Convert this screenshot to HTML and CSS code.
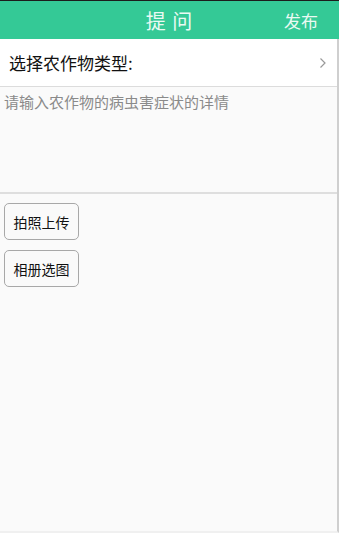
FILE: index.html
```html
<!DOCTYPE html>
<html lang="zh">
<head>
<meta charset="utf-8">
<link rel="stylesheet" href="styles.css">
</head>
<body>
<div class="app">
  <header class="topbar">
    <div class="title">提 问</div>
    <div class="publish">发布</div>
  </header>
  <main class="content">
    <div class="select-row">
      <span class="select-label">选择农作物类型:</span>
      <svg class="chevron" width="8" height="12" viewBox="0 0 8 12"><path d="M1.5 1.5 L6 6 L1.5 10.5" fill="none" stroke="#999" stroke-width="1.2"/></svg>
    </div>
    <div class="detail">
      <div class="placeholder">请输入农作物的病虫害症状的详情</div>
    </div>
    <div class="actions">
      <button class="btn">拍照上传</button>
      <button class="btn">相册选图</button>
    </div>
  </main>
</div>
</body>
</html>
```

FILE: styles.css
```css
html, body {
  margin: 0;
  padding: 0;
  height: 100%;
}
body {
  background: #fafafa;
  font-family: "Noto Sans CJK SC", "Noto Sans", sans-serif;
  color: #111;
}
.app {
  display: flex;
  flex-direction: column;
  height: 533px;
  box-sizing: border-box;
  border-top: 1px solid #1c1c1c;
}
.topbar {
  height: 38px;
  flex: none;
  background: #34c996;
  display: flex;
  align-items: center;
  justify-content: center;
  position: relative;
}
.title {
  color: #eafaf3;
  font-size: 20px;
  letter-spacing: 1px;
}
.publish {
  position: absolute;
  right: 21px;
  top: 50%;
  transform: translateY(-50%);
  color: #eafaf3;
  font-size: 17px;
}
.content {
  flex: 1;
  display: flex;
  flex-direction: column;
  border-right: 2px solid #cfcfcf;
  border-bottom: 2px solid #f0f0f0;
}
.select-row {
  height: 47px;
  background: #fff;
  display: flex;
  align-items: center;
  justify-content: space-between;
  padding: 0 10px 0 9px;
  border-bottom: 1px solid #dcdcdc;
}
.select-label {
  font-size: 17px;
  color: #111;
}
.chevron {
  display: block;
}
.detail {
  height: 107px;
  background: #fafafa;
  border-bottom: 2px solid #dedede;
  padding: 5px 4px;
  box-sizing: border-box;
}
.placeholder {
  font-size: 15px;
  color: #8a8a8a;
  line-height: 20px;
}
.actions {
  display: flex;
  flex-direction: column;
  align-items: flex-start;
  gap: 10px;
  padding: 9px 4px;
}
.btn {
  width: 75px;
  height: 37px;
  border: 1px solid #a8a8a8;
  border-radius: 5px;
  background: #fafafa;
  font-family: "Noto Sans CJK SC", "Noto Sans", sans-serif;
  font-size: 14px;
  color: #111;
  padding: 0;
}
```
